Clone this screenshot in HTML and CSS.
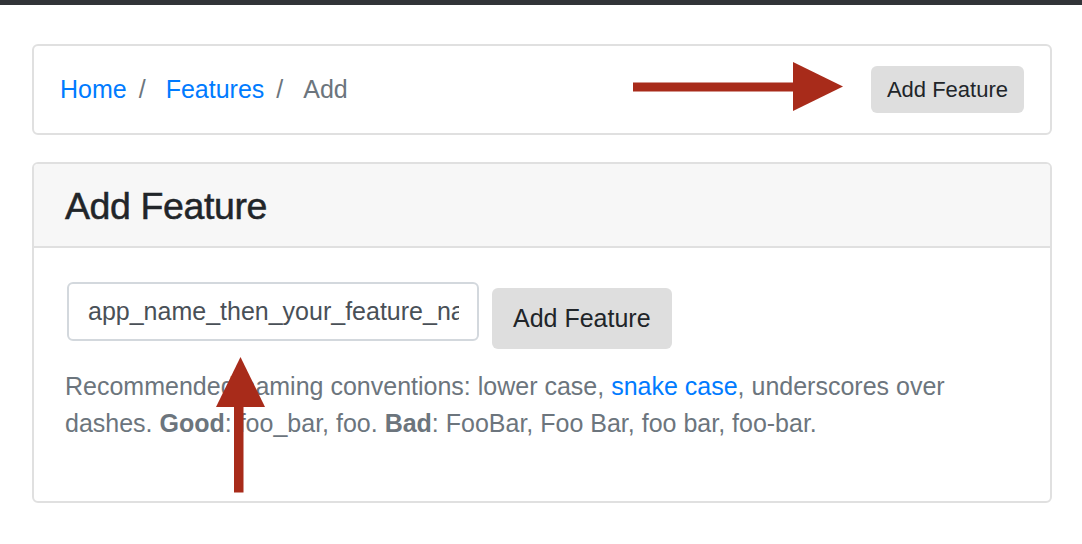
FILE: index.html
```html
<!DOCTYPE html>
<html lang="en">
<head>
<meta charset="utf-8">
<title>Add Feature</title>
<link rel="stylesheet" href="styles.css">
</head>
<body>
<div class="topbar"></div>
<main class="page">
  <nav class="crumb-card">
    <ol class="crumbs">
      <li><a href="#" class="crumb-link">Home</a></li>
      <li class="sep">/</li>
      <li><a href="#" class="crumb-link">Features</a></li>
      <li class="sep">/</li>
      <li class="crumb-current">Add</li>
    </ol>
    <button class="btn btn-sm" type="button">Add Feature</button>
  </nav>

  <section class="card">
    <header class="card-header">
      <h4 class="card-title">Add Feature</h4>
    </header>
    <div class="card-body">
      <form class="form-row">
        <input class="form-control" type="text" value="app_name_then_your_feature_name">
        <button class="btn btn-md" type="button">Add Feature</button>
      </form>
      <p class="help">Recommended naming conventions: lower case, <a href="#" class="help-link">snake case</a>, underscores over dashes. <b>Good</b>: foo_bar, foo. <b>Bad</b>: FooBar, Foo Bar, foo bar, foo-bar.</p>
    </div>
  </section>
</main>

<svg class="annotations" width="1082" height="544" viewBox="0 0 1082 544" aria-hidden="true">
  <rect x="633" y="82.5" width="163" height="9" fill="#a82b1a"/>
  <polygon points="793,62 843,86.5 793,111" fill="#a82b1a"/>
  <rect x="234" y="400" width="9.5" height="92.5" fill="#a82b1a"/>
  <polygon points="216,407 240.5,357 265,407" fill="#a82b1a"/>
</svg>
</body>
</html>
```

FILE: styles.css
```css
* { box-sizing: border-box; }

html, body {
  margin: 0;
  padding: 0;
  background: #ffffff;
}

body {
  font-family: "Liberation Sans", Arial, Helvetica, sans-serif;
  font-size: 25px;
  line-height: 37.5px;
  color: #212529;
  position: relative;
  width: 1082px;
  height: 544px;
  overflow: hidden;
}

.topbar {
  height: 5px;
  background: #313438;
}

.page {
  padding: 39px 30px 0 32px;
}

.crumb-card {
  display: flex;
  justify-content: space-between;
  align-items: center;
  border: 2px solid #e0e0e0;
  border-radius: 6px;
  padding: 20px 26px;
}

.crumbs {
  display: flex;
  align-items: center;
  list-style: none;
  margin: 0;
  padding: 0;
}

.crumb-link {
  color: #007bff;
  text-decoration: none;
}

.sep {
  color: #6c757d;
  margin: 0 20px 0 12px;
}

.crumb-current {
  color: #6c757d;
}

.btn {
  font-family: "Liberation Sans", Arial, Helvetica, sans-serif;
  color: #212529;
  background: #dedede;
  border: none;
  border-radius: 6px;
  cursor: pointer;
}

.btn-sm {
  height: 47px;
  padding: 0 16px;
  font-size: 22px;
  line-height: 47px;
}

.btn-md {
  height: 61px;
  padding: 0 21px;
  font-size: 25px;
  line-height: 61px;
  margin-top: 6px;
  margin-left: 13px;
}

.card {
  margin-top: 27px;
  border: 2px solid #e0e0e0;
  border-radius: 6px;
  overflow: hidden;
}

.card-header {
  background: #f7f7f7;
  border-bottom: 2px solid #e0e0e0;
  padding: 20px 31px 17px;
}

.card-title {
  margin: 0;
  font-size: 37.5px;
  line-height: 45px;
  font-weight: 400;
  color: #212529;
  letter-spacing: -0.4px;
  -webkit-text-stroke: 0.5px #212529;
}

.card-body {
  padding: 34px 31px 33px;
}

.form-row {
  display: flex;
  align-items: flex-start;
  margin: 0;
}

.form-control {
  width: 412px;
  height: 59px;
  margin-left: 2px;
  padding: 0 18px 0 19px;
  font-family: "Liberation Sans", Arial, Helvetica, sans-serif;
  font-size: 25px;
  color: #495057;
  background: #ffffff;
  border: 2px solid #d3d8dd;
  border-radius: 6px;
  outline: none;
}

.help {
  margin: 18.5px 0 25px;
  color: #6c757d;
  font-size: 25px;
  line-height: 37.5px;
}

.help b {
  font-weight: 700;
}

.help-link {
  color: #007bff;
  text-decoration: none;
}

.annotations {
  position: absolute;
  top: 0;
  left: 0;
  pointer-events: none;
}
```
